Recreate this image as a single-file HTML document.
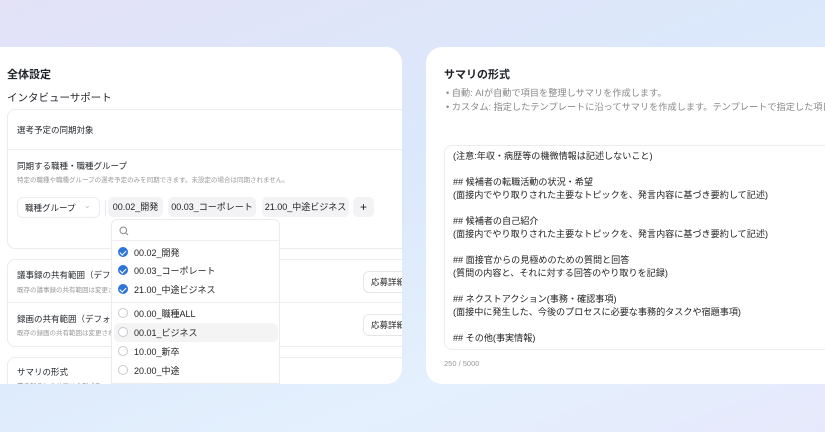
<!DOCTYPE html>
<html><head><meta charset="utf-8"><style>
*{box-sizing:border-box;margin:0;padding:0}
body{width:825px;height:432px;overflow:hidden;position:relative;font-family:"Liberation Sans","Noto Sans CJK JP",sans-serif;color:#1f2328;
background:linear-gradient(160deg,#e3e2f7 0%,#dbe8fb 40%,#e4f0fd 75%,#e6e9fb 100%)}
.abs{position:absolute;white-space:nowrap}
.card{position:absolute;background:#fff;border-radius:16px}
.box{position:absolute;border:1px solid #ececef;border-radius:8px;background:#fff}
.chip{position:absolute;top:197px;height:20px;background:#f3f3f5;border-radius:5px;font-size:9px;line-height:20px;text-align:center;color:#222;white-space:nowrap}
.it{position:absolute;left:118px;font-size:9px;color:#222}
.cb{position:absolute;left:118px;width:10px;height:10px;border-radius:50%}
.on{background:#2f74d8}
.off{border:1px solid #c9c9cf;background:#fff}
.on:after{content:"";position:absolute;left:3px;top:1.5px;width:2.5px;height:5px;border:solid #fff;border-width:0 1.5px 1.5px 0;transform:rotate(45deg)}
.btn{position:absolute;left:383px;width:60px;height:22px;border:1px solid #e6e6ea;border-radius:6px;font-size:8.5px;line-height:20px;padding-left:7px;color:#222;background:#fff;white-space:nowrap}
.ta{font-size:9.1px;color:#222}
</style></head><body>
<div class="card" style="left:-20px;top:47px;width:422px;height:337px;overflow:hidden">
 <div class="abs" style="left:27px;top:19px;font-size:11px;font-weight:bold">全体設定</div>
 <div class="abs" style="left:27px;top:43px;font-size:10.5px">インタビューサポート</div>
 <div class="box" style="left:27px;top:62px;width:420px;height:140px"></div>
 <div class="abs" style="left:37px;top:77px;font-size:8.5px">選考予定の同期対象</div>
 <div style="position:absolute;left:27px;top:102px;width:420px;height:1px;background:#efeff2"></div>
 <div class="abs" style="left:37px;top:113px;font-size:8.5px">同期する職種・職種グループ</div>
 <div class="abs" style="left:37px;top:127px;font-size:6.5px;color:#999">特定の職種や職種グループの選考予定のみを同期できます。未設定の場合は同期されません。</div>
 <div class="box" style="left:37px;top:150px;width:83px;height:21px;border-radius:6px"></div>
 <div class="abs" style="left:45px;top:155px;font-size:8.5px">職種グループ</div>
 <div class="abs" style="left:104px;top:154px;font-size:8px;color:#bbb">⌄</div>
 <div style="position:absolute;left:125px;top:153px;width:1px;height:16px;background:#e6e6ea"></div>
 <div class="box" style="left:27px;top:212px;width:420px;height:88px"></div>
 <div class="abs" style="left:37px;top:222px;font-size:8.5px">議事録の共有範囲（デフォルト）</div>
 <div class="abs" style="left:37px;top:237px;font-size:6.5px;color:#999">既存の議事録の共有範囲は変更されません</div>
 <div style="position:absolute;left:27px;top:255px;width:420px;height:1px;background:#efeff2"></div>
 <div class="abs" style="left:37px;top:266px;font-size:8.5px">録画の共有範囲（デフォルト）</div>
 <div class="abs" style="left:37px;top:280px;font-size:6.5px;color:#999">既存の録画の共有範囲は変更されません</div>
 <div class="btn" style="top:224px">応募詳細</div>
 <div class="btn" style="top:267px">応募詳細</div>
 <div class="box" style="left:27px;top:310px;width:420px;height:60px"></div>
 <div class="abs" style="left:37px;top:319px;font-size:8.5px">サマリの形式</div>
 <div class="abs" style="left:37px;top:333px;font-size:6.5px;color:#999">書き起こしのサマリの形式を</div>
</div>
<div class="chip" style="left:108px;width:55px">00.02_開発</div>
<div class="chip" style="left:168px;width:88px">00.03_コーポレート</div>
<div class="chip" style="left:262px;width:87px">21.00_中途ビジネス</div>
<div class="chip" style="left:353px;width:21px;font-size:12px">+</div>
<!-- dropdown -->
<div style="position:absolute;left:111px;top:219px;width:169px;height:165px;background:#fff;border:1px solid #ececef;border-radius:6px 6px 0 0;overflow:hidden">
 <svg style="position:absolute;left:7px;top:6px" width="10" height="10" viewBox="0 0 10 10"><circle cx="4.3" cy="4.3" r="3.3" fill="none" stroke="#888" stroke-width="1"/><line x1="6.8" y1="6.8" x2="9" y2="9" stroke="#888" stroke-width="1"/></svg>
 <div style="position:absolute;left:0;top:20px;width:169px;height:1px;background:#eee"></div>
 <div style="position:absolute;left:0;top:82px;width:169px;height:1px;background:#eee"></div>
 <div style="position:absolute;left:2px;top:103px;width:164px;height:19px;background:#f4f4f5;border-radius:5px"></div>
</div>
<div class="cb on" style="top:247px"></div><div class="it" style="left:134px;top:246px">00.02_開発</div>
<div class="cb on" style="top:265px"></div><div class="it" style="left:134px;top:264px">00.03_コーポレート</div>
<div class="cb on" style="top:284px"></div><div class="it" style="left:134px;top:283px">21.00_中途ビジネス</div>
<div class="cb off" style="top:308px"></div><div class="it" style="left:134px;top:307px">00.00_職種ALL</div>
<div class="cb off" style="top:327px"></div><div class="it" style="left:134px;top:326px">00.01_ビジネス</div>
<div class="cb off" style="top:346px"></div><div class="it" style="left:134px;top:345px">10.00_新卒</div>
<div class="cb off" style="top:365px"></div><div class="it" style="left:134px;top:364px">20.00_中途</div>
<!-- right -->
<div class="card" style="left:426px;top:47px;width:430px;height:337px;overflow:hidden">
 <div class="abs" style="left:18px;top:19px;font-size:11px;font-weight:bold">サマリの形式</div>
 <div class="abs" style="left:20px;top:38px;font-size:9.2px;color:#888">• 自動: AIが自動で項目を整理しサマリを作成します。</div>
 <div class="abs" style="left:20px;top:52px;font-size:9.2px;color:#888">• カスタム: 指定したテンプレートに沿ってサマリを作成します。テンプレートで指定した項目</div>
 <div class="box" style="left:18px;top:98px;width:420px;height:205px"></div>
 <div class="abs ta" style="left:27px;top:103px;line-height:13px">(注意:年収・病歴等の機微情報は記述しないこと)<br><br>## 候補者の転職活動の状況・希望<br>(面接内でやり取りされた主要なトピックを、発言内容に基づき要約して記述)<br><br>## 候補者の自己紹介<br>(面接内でやり取りされた主要なトピックを、発言内容に基づき要約して記述)<br><br>## 面接官からの見極めのための質問と回答<br>(質問の内容と、それに対する回答のやり取りを記録)<br><br>## ネクストアクション(事務・確認事項)<br>(面接中に発生した、今後のプロセスに必要な事務的タスクや宿題事項)<br><br>## その他(事実情報)</div>
 <div class="abs" style="left:18px;top:312px;font-size:7.5px;color:#999">250 / 5000</div>
</div>
</body></html>
